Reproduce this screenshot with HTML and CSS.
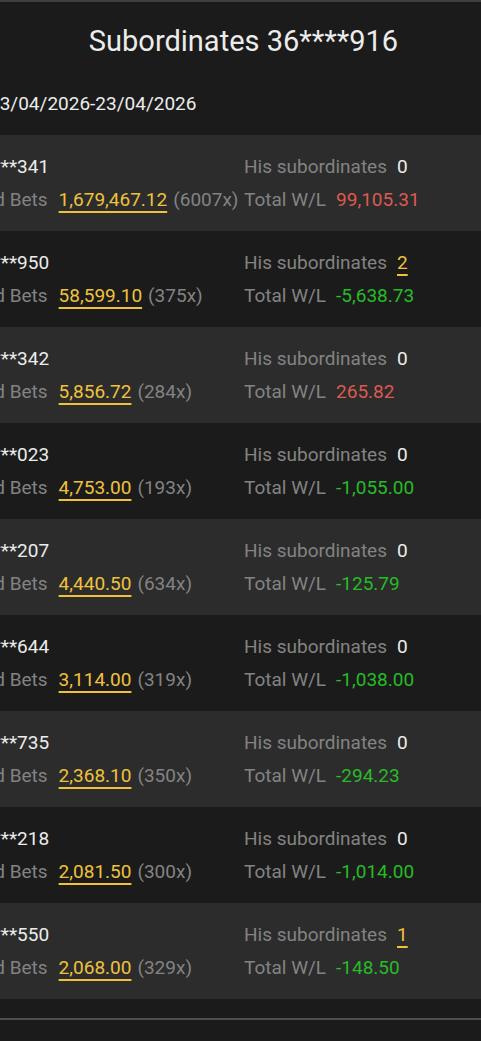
FILE: index.html
```html
<!DOCTYPE html>
<html>
<head>
<meta charset="utf-8">
<link rel="stylesheet" href="styles.css">
</head>
<body>
<div class="topbar"></div>
<h1 class="title">Subordinates 36****916</h1>
<div class="scroller">
  <div class="date">23/04/2026-23/04/2026</div>
  <ul class="list">
    <li class="row odd">
      <div class="col-left"><div class="line name">36****341</div><div class="line"><span class="label">Valid Bets</span><span class="bet">1,679,467.12</span><span class="count">(6007x)</span></div></div>
      <div class="col-right"><div class="line"><span class="label">His subordinates</span><span class="val">0</span></div><div class="line"><span class="label">Total W/L</span><span class="val red">99,105.31</span></div></div>
    </li>
    <li class="row">
      <div class="col-left"><div class="line name">36****950</div><div class="line"><span class="label">Valid Bets</span><span class="bet">58,599.10</span><span class="count">(375x)</span></div></div>
      <div class="col-right"><div class="line"><span class="label">His subordinates</span><span class="val link">2</span></div><div class="line"><span class="label">Total W/L</span><span class="val green">-5,638.73</span></div></div>
    </li>
    <li class="row odd">
      <div class="col-left"><div class="line name">36****342</div><div class="line"><span class="label">Valid Bets</span><span class="bet">5,856.72</span><span class="count">(284x)</span></div></div>
      <div class="col-right"><div class="line"><span class="label">His subordinates</span><span class="val">0</span></div><div class="line"><span class="label">Total W/L</span><span class="val red">265.82</span></div></div>
    </li>
    <li class="row">
      <div class="col-left"><div class="line name">36****023</div><div class="line"><span class="label">Valid Bets</span><span class="bet">4,753.00</span><span class="count">(193x)</span></div></div>
      <div class="col-right"><div class="line"><span class="label">His subordinates</span><span class="val">0</span></div><div class="line"><span class="label">Total W/L</span><span class="val green">-1,055.00</span></div></div>
    </li>
    <li class="row odd">
      <div class="col-left"><div class="line name">36****207</div><div class="line"><span class="label">Valid Bets</span><span class="bet">4,440.50</span><span class="count">(634x)</span></div></div>
      <div class="col-right"><div class="line"><span class="label">His subordinates</span><span class="val">0</span></div><div class="line"><span class="label">Total W/L</span><span class="val green">-125.79</span></div></div>
    </li>
    <li class="row">
      <div class="col-left"><div class="line name">36****644</div><div class="line"><span class="label">Valid Bets</span><span class="bet">3,114.00</span><span class="count">(319x)</span></div></div>
      <div class="col-right"><div class="line"><span class="label">His subordinates</span><span class="val">0</span></div><div class="line"><span class="label">Total W/L</span><span class="val green">-1,038.00</span></div></div>
    </li>
    <li class="row odd">
      <div class="col-left"><div class="line name">36****735</div><div class="line"><span class="label">Valid Bets</span><span class="bet">2,368.10</span><span class="count">(350x)</span></div></div>
      <div class="col-right"><div class="line"><span class="label">His subordinates</span><span class="val">0</span></div><div class="line"><span class="label">Total W/L</span><span class="val green">-294.23</span></div></div>
    </li>
    <li class="row">
      <div class="col-left"><div class="line name">36****218</div><div class="line"><span class="label">Valid Bets</span><span class="bet">2,081.50</span><span class="count">(300x)</span></div></div>
      <div class="col-right"><div class="line"><span class="label">His subordinates</span><span class="val">0</span></div><div class="line"><span class="label">Total W/L</span><span class="val green">-1,014.00</span></div></div>
    </li>
    <li class="row odd">
      <div class="col-left"><div class="line name">36****550</div><div class="line"><span class="label">Valid Bets</span><span class="bet">2,068.00</span><span class="count">(329x)</span></div></div>
      <div class="col-right"><div class="line"><span class="label">His subordinates</span><span class="val link">1</span></div><div class="line"><span class="label">Total W/L</span><span class="val green">-148.50</span></div></div>
    </li>
  </ul>
</div>
<div class="footer-line"></div>
</body>
</html>
```
FILE: styles.css
```css
html, body {
  margin: 0;
  padding: 0;
  background: #1b1b1b;
  font-family: Roboto, "Liberation Sans", sans-serif;
  color: #e8e8e8;
  overflow: hidden;
}
.topbar {
  height: 2px;
  background: #3f3f3f;
}
.title {
  margin: 0;
  height: 78px;
  text-align: center;
  font-size: 29px;
  font-weight: 400;
  line-height: 78px;
  color: #ececec;
  padding-left: 6px;
}
.scroller {
  overflow: hidden;
}
.date {
  margin-left: -11px;
  height: 55px;
  font-size: 19px;
  line-height: 48px;
  color: #ececec;
  white-space: nowrap;
}
.list {
  list-style: none;
  margin: 0;
  padding: 0;
}
.row {
  display: grid;
  grid-template-columns: 281px 1fr;
  margin-left: -37px;
  padding: 15px 0;
  height: 66px;
  font-size: 19px;
  background: #1b1b1b;
  white-space: nowrap;
}
.row.odd {
  background: #2c2c2c;
}
.line {
  height: 33px;
  line-height: 33px;
}
.name {
  color: #ececec;
}
.label {
  color: #838383;
}
.bet {
  margin-left: 11px;
  color: #f0c23c;
  text-decoration: underline;
  text-decoration-thickness: 2px;
  text-underline-offset: 5px;
}
.count {
  margin-left: 6px;
  color: #838383;
}
.val {
  margin-left: 10px;
  color: #ececec;
}
.val.link {
  color: #f0c23c;
  text-decoration: underline;
  text-decoration-thickness: 2px;
  text-underline-offset: 5px;
}
.val.red {
  color: #dc5a50;
}
.val.green {
  color: #27bb27;
}
.footer-line {
  margin-top: 19px;
  height: 2px;
  background: #4e4e4e;
}
```
